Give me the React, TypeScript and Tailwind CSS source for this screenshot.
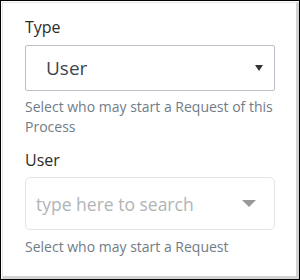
export default function App() {
    return (
        <div className="w-[300px] h-[280px] border border-black bg-white font-['Open_Sans',sans-serif]">
            <div className="h-[277px] border-t border-l border-t-[#e6e6e6] border-l-[#e6e6e6] border-r-[3px] border-b-[3px] border-r-[#d2d2d2] border-b-[#d2d2d2] mt-px ml-px">
                <div className="pl-[22px] pr-[10px] pt-[12px] flex flex-col">
                    <label className="text-[16px] leading-[24px] text-[#2b2b2b]">Type</label>
                    <div className="mt-[6px] h-[46px] w-[250px] border border-[#b9c0c7] rounded-[2px] flex items-center pl-[20px] pr-[10px]">
                        <span className="flex-1 text-[19px] text-[#3d4650] pt-px">User</span>
                        <svg width="8" height="6" viewBox="0 0 8 6" className="mr-[1px]">
                            <path d="M0 0 L8 0 L4 6 Z" fill="#333" />
                        </svg>
                    </div>
                    <p className="mt-[6px] text-[14px] leading-[20px] text-[#717c87]">
                        Select who may start a Request of this Process
                    </p>
                    <label className="mt-[11px] text-[16px] leading-[24px] text-[#2b2b2b]">User</label>
                    <div className="mt-[5px] h-[53px] w-[250px] border border-[#e4e4e4] rounded-[5px] flex items-center pl-[10px] pr-[18px]">
                        <span className="flex-1 text-[17.5px] text-[#b0b4b8] pt-[2px]">type here to search</span>
                        <svg width="14" height="7" viewBox="0 0 14 7">
                            <path d="M0 0 L14 0 L7 7 Z" fill="#999" />
                        </svg>
                    </div>
                    <p className="mt-[7px] text-[14px] leading-[20px] text-[#717c87]">
                        Select who may start a Request
                    </p>
                </div>
            </div>
        </div>
    );
}
